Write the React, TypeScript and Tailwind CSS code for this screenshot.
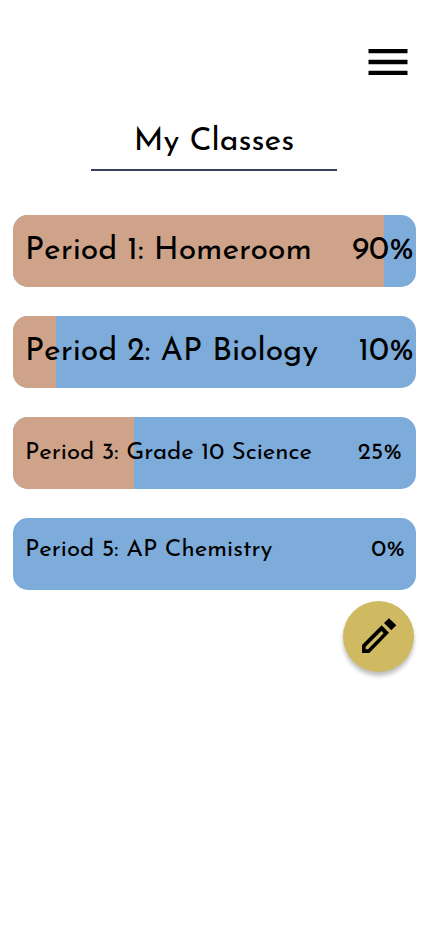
type ClassItem = {
  name: string;
  percent: number;
  fill: number;
  nameStyle: string;
  percentStyle: string;
};

const classes: ClassItem[] = [
  { name: "Period 1: Homeroom", percent: 90, fill: 92, nameStyle: "text-[32px]", percentStyle: "pr-[2px] text-[32px]" },
  { name: "Period 2: AP Biology", percent: 10, fill: 10.7, nameStyle: "text-[32px]", percentStyle: "pr-[2px] text-[32px]" },
  { name: "Period 3: Grade 10 Science", percent: 25, fill: 30, nameStyle: "text-2xl", percentStyle: "pr-[14px] text-2xl" },
  { name: "Period 5: AP Chemistry", percent: 0, fill: 0, nameStyle: "pb-2 text-2xl", percentStyle: "pb-2 pr-[11px] text-2xl" },
];

function MenuIcon() {
  return (
    <svg viewBox="0 0 24 24" className="size-[52px]" fill="currentColor" aria-hidden="true">
      <path d="M3 18h18v-2H3v2zm0-5h18v-2H3v2zm0-7v2h18V6H3z" />
    </svg>
  );
}

function PencilIcon() {
  return (
    <svg viewBox="0 0 108 108" className="size-9" fill="currentColor" aria-hidden="true">
      <path
        fillRule="evenodd"
        d="M3 81 62 22 84 44 25 105H3ZM14 86V94H21L68 46 61 39Z"
      />
      <path d="M69 15 84 1 106 22 91 37Z" />
    </svg>
  );
}

function ClassRow({ item }: { item: ClassItem }) {
  return (
    <li className="grid h-[72px] overflow-hidden rounded-[15px] bg-[#7dacdb]">
      <div className="col-start-1 row-start-1 bg-[#cfa389]" style={{ width: `${item.fill}%` }} />
      <a
        href="#class"
        className="col-start-1 row-start-1 flex items-center justify-between whitespace-nowrap pl-3"
      >
        <span className={item.nameStyle}>{item.name}</span>
        <span className={item.percentStyle}>{item.percent}%</span>
      </a>
    </li>
  );
}

export default function App() {
  return (
    <div className="min-h-screen bg-white px-3 font-['Josefin_Sans','Lato',sans-serif] text-black">
      <header className="flex flex-col pt-9">
        <button type="button" aria-label="Open menu" className="mr-[2px] self-end">
          <MenuIcon />
        </button>
        <h1 className="mt-8 w-[246px] self-center border-b-2 border-[#34425a] pb-[7px] pt-[2px] text-center text-[32px] leading-10">
          My Classes
        </h1>
      </header>
      <main className="flex flex-col pt-11">
        <ul className="flex flex-col gap-[29px] pl-px">
          {classes.map((item) => (
            <ClassRow key={item.name} item={item} />
          ))}
        </ul>
        <button
          type="button"
          aria-label="Edit classes"
          className="mr-[2px] mt-[11px] flex size-[71px] items-center justify-center self-end rounded-full bg-[#cfba61] pb-[2px] shadow-[0_4px_4px_rgba(0,0,0,0.25)]"
        >
          <PencilIcon />
        </button>
      </main>
    </div>
  );
}
